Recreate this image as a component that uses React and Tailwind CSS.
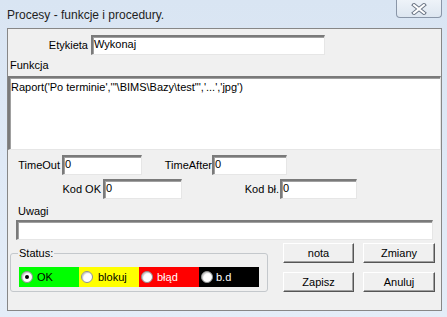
import React from "react";

const F = { fontFamily: '"Liberation Sans", Arial, sans-serif' };

function Input({ className = "", value = "" }) {
  return (
    <div
      className={`h-[20px] bg-white border-t-2 border-l-2 border-b border-r border-t-[#7a7a7a] border-l-[#7a7a7a] border-b-[#e6e6e6] border-r-[#e6e6e6] shadow-[inset_1px_1px_0_#a0a0a0] pl-[1px] text-[11px] leading-[15px] text-black ${className}`}
    >
      {value}
    </div>
  );
}

function Btn({ children }) {
  return (
    <div className="h-[20px] flex items-center justify-center bg-[#f0f0f0] border border-t-white border-l-white border-b-[#555] border-r-[#555] shadow-[inset_-1px_-1px_0_#a0a0a0] text-[11px] leading-[13px] text-black">
      {children}
    </div>
  );
}

function Radio({ checked }) {
  return (
    <div className="w-[12px] h-[12px] rounded-full bg-white border border-[#8e8f8f] shadow-[inset_1px_1px_1px_#c8c8c8] flex items-center justify-center shrink-0">
      {checked && <div className="w-[4px] h-[4px] rounded-full bg-black" />}
    </div>
  );
}

export default function App() {
  return (
    <div
      className="w-[447px] h-[317px] bg-gradient-to-b from-[#d9e5f3] via-[#dfe9f6] to-[#e4edf8] flex flex-col overflow-hidden"
      style={F}
    >
      {/* title bar */}
      <div className="h-[28px] flex items-start shrink-0">
        <div className="pl-[7px] mt-[7px] text-[12px] leading-[16px] text-[#1e1e1e]">
          Procesy - funkcje i procedury.
        </div>
        <div className="ml-auto mr-[5px] w-[46px] h-[18px] rounded-b-[4px] border border-t-0 border-[#8a96a8] bg-gradient-to-b from-[#eef3f9] to-[#dde6f0] flex items-center justify-center">
          <svg width="16" height="12" viewBox="0 0 16 12">
            <path d="M3 2 L13 10 M13 2 L3 10" stroke="#6b7585" strokeWidth="4" strokeLinecap="square" />
            <path d="M3 2 L13 10 M13 2 L3 10" stroke="#ffffff" strokeWidth="2" strokeLinecap="square" />
          </svg>
        </div>
      </div>

      {/* client */}
      <div className="ml-[7px] w-[435px] h-[283px] border border-[#878787] bg-[#f0f0f0] flex flex-col shrink-0 text-[11px] leading-[13px] text-black">
        {/* Etykieta */}
        <div className="flex items-center mt-[6px] h-[20px]">
          <div className="w-[80px] text-right">Etykieta</div>
          <Input className="ml-[3px] w-[234px]" value="Wykonaj" />
        </div>
        {/* Funkcja label */}
        <div className="h-[21px] flex items-center pl-[2px]">Funkcja</div>
        {/* textarea */}
        <div className="h-[74px] w-[433px] bg-white border-t-2 border-l-2 border-b border-r border-t-[#7a7a7a] border-l-[#7a7a7a] border-b-[#e6e6e6] border-r-[#e6e6e6] shadow-[inset_1px_1px_0_#a0a0a0] pl-[1px] pt-[3px]">
          Raport('Po terminie','"\BIMS\Bazy\test"','...','jpg')
        </div>
        {/* TimeOut row */}
        <div className="flex items-center mt-[5px] h-[20px]">
          <div className="w-[52px] text-right">TimeOut</div>
          <Input className="ml-[2px] w-[80px]" value="0" />
          <div className="w-[70px] text-right">TimeAfter</div>
          <Input className="w-[75px]" value="0" />
        </div>
        {/* Kod row */}
        <div className="flex items-center mt-[4px] h-[20px]">
          <div className="w-[93px] text-right">Kod OK</div>
          <Input className="ml-[2px] w-[79px]" value="0" />
          <div className="w-[97px] text-right">Kod bł.</div>
          <Input className="ml-[1px] w-[77px]" value="0" />
        </div>
        {/* Uwagi */}
        <div className="h-[21px] pt-[6px] pl-[10px]">Uwagi</div>
        <Input className="ml-[8px] w-[417px]" value="" />
        {/* bottom */}
        <div className="flex items-start mt-[3px]">
          <div className="relative ml-[2px] mt-[10px] w-[258px] h-[39px] border border-[#c4c8cc] rounded-[3px]">
            <div className="absolute left-[7px] top-[-7px] px-[1px] bg-[#f0f0f0] leading-[13px]">Status:</div>
            <div className="flex mt-[13px] ml-[8px] h-[20px] text-[11px]">
              <div className="w-[60px] h-[20px] bg-[#00ff00] flex items-center pl-[2px] gap-[4px] text-black">
                <Radio checked />
                <span>OK</span>
              </div>
              <div className="w-[60px] h-[20px] bg-[#ffff00] flex items-center pl-[2px] gap-[5px] text-black">
                <Radio />
                <span>blokuj</span>
              </div>
              <div className="w-[60px] h-[20px] bg-[#ff0000] flex items-center pl-[2px] gap-[4px] text-white">
                <Radio />
                <span>błąd</span>
              </div>
              <div className="w-[60px] h-[20px] bg-black flex items-center pl-[2px] gap-[3px] text-white">
                <Radio />
                <span>b.d</span>
              </div>
            </div>
          </div>
          <div className="ml-[15px] grid grid-cols-[71px_72px] gap-x-[9px] gap-y-[9px]">
            <Btn>nota</Btn>
            <Btn>Zmiany</Btn>
            <Btn>Zapisz</Btn>
            <Btn>Anuluj</Btn>
          </div>
        </div>
      </div>
    </div>
  );
}
